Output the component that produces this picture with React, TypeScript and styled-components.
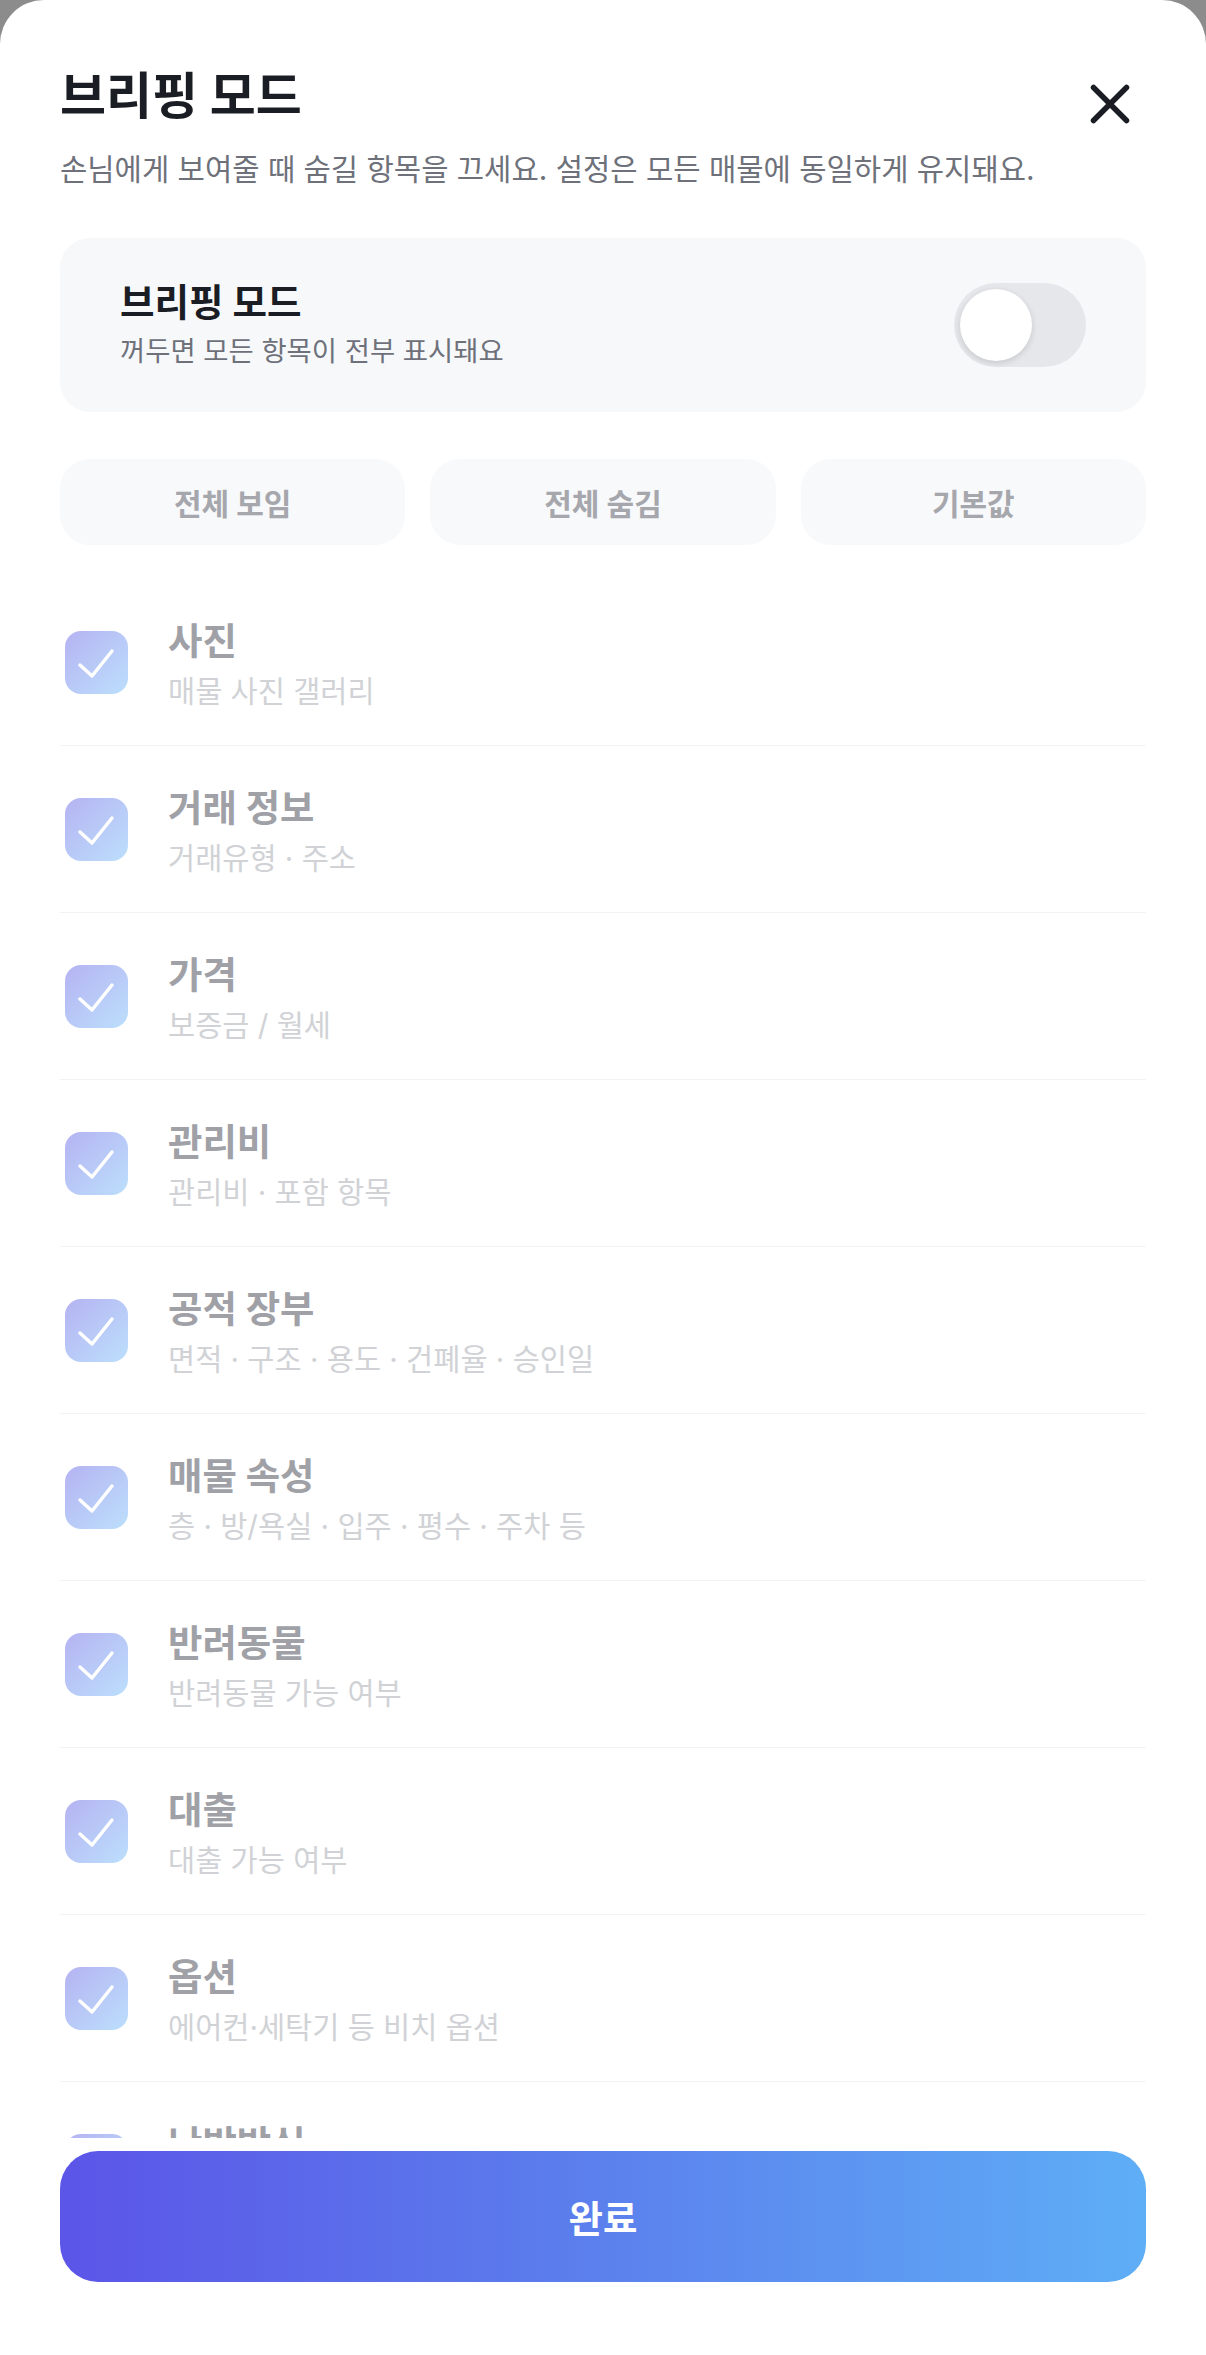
import React, { useState } from 'react';
import styled, { createGlobalStyle } from 'styled-components';

const GlobalStyle = createGlobalStyle`
  html, body {
    margin: 0;
    padding: 0;
    background: #8c8c8c;
  }
  body {
    font-family: "Inter", "Noto Sans CJK KR", "Noto Sans", sans-serif;
    -webkit-font-smoothing: antialiased;
  }
  * { box-sizing: border-box; }
`;

const Sheet = styled.div`
  width: 1206px;
  height: 2355px;
  background: #ffffff;
  border-radius: 44px 44px 0 0;
  display: flex;
  flex-direction: column;
  overflow: hidden;
`;

const Top = styled.div`
  flex-shrink: 0;
  padding: 66px 60px 0;
`;

const Header = styled.div`
  display: flex;
  justify-content: space-between;
  align-items: flex-start;
`;

const Title = styled.h1`
  margin: 0;
  font-size: 50px;
  line-height: 60px;
  font-weight: 700;
  color: #1b1d24;
`;

const CloseButton = styled.button`
  width: 44px;
  height: 44px;
  margin: 16px 14px 0 0;
  padding: 0;
  border: 0;
  background: none;
  display: flex;
  align-items: center;
  justify-content: center;
  cursor: pointer;
`;

const Description = styled.p`
  margin: 23px 0 0;
  font-size: 29.7px;
  line-height: 40px;
  color: #6e717a;
`;

const ModeCard = styled.div`
  margin-top: 49px;
  background: #f7f8fa;
  border-radius: 30px;
  padding: 43px 60px;
  display: flex;
  align-items: center;
  justify-content: space-between;
`;

const CardTitle = styled.div`
  font-size: 37.5px;
  line-height: 44px;
  font-weight: 700;
  color: #1b1d24;
`;

const CardSub = styled.div`
  margin-top: 8px;
  font-size: 27.4px;
  line-height: 36px;
  color: #6e717a;
`;

const SwitchTrack = styled.button<{ $on: boolean }>`
  width: 132px;
  height: 84px;
  border-radius: 42px;
  border: 0;
  padding: 6px;
  background: ${(p) => (p.$on ? '#5b6af0' : '#e5e7eb')};
  display: flex;
  justify-content: ${(p) => (p.$on ? 'flex-end' : 'flex-start')};
  cursor: pointer;
`;

const SwitchKnob = styled.span`
  width: 72px;
  height: 72px;
  border-radius: 50%;
  background: #ffffff;
  box-shadow: 0 2px 6px rgba(0, 0, 0, 0.14);
`;

const Actions = styled.div`
  margin-top: 47px;
  display: grid;
  grid-template-columns: repeat(3, 1fr);
  gap: 25px;
`;

const ActionButton = styled.button`
  height: 86px;
  border: 0;
  border-radius: 30px;
  background: #f8f9fb;
  font-family: inherit;
  font-size: 30px;
  font-weight: 700;
  color: #a6a7ad;
  cursor: pointer;
`;

const List = styled.div`
  flex: 1;
  min-height: 0;
  overflow: hidden;
  margin-top: 34px;
  padding: 0 60px;
`;

const Row = styled.div`
  height: 167px;
  border-bottom: 1px solid #f2f3f5;
  display: flex;
  align-items: center;
  gap: 40px;
  padding-left: 5px;
`;

const CheckBox = styled.span`
  width: 63px;
  height: 63px;
  flex-shrink: 0;
  border-radius: 16px;
  background: linear-gradient(135deg, #b5b3f2 0%, #bcdffc 100%);
  display: flex;
  align-items: center;
  justify-content: center;
`;

const RowText = styled.div`
  display: flex;
  flex-direction: column;
  margin-top: 5px;
`;

const RowTitle = styled.div`
  font-size: 37.4px;
  line-height: 44px;
  font-weight: 700;
  color: #a0a1a7;
`;

const RowSub = styled.div`
  margin-top: 8px;
  font-size: 29.5px;
  line-height: 38px;
  color: #d0d2d6;
`;

const Footer = styled.div`
  flex-shrink: 0;
  background: #ffffff;
  padding: 13px 60px 73px;
`;

const DoneButton = styled.button`
  width: 100%;
  height: 131px;
  border: 0;
  border-radius: 38px;
  background: linear-gradient(90deg, #5b55e8 0%, #5b7cec 45%, #5eaef6 100%);
  color: #ffffff;
  font-family: inherit;
  font-size: 37.4px;
  font-weight: 700;
  cursor: pointer;
`;

const items = [
  { title: '사진', sub: '매물 사진 갤러리' },
  { title: '거래 정보', sub: '거래유형 · 주소' },
  { title: '가격', sub: '보증금 / 월세' },
  { title: '관리비', sub: '관리비 · 포함 항목' },
  { title: '공적 장부', sub: '면적 · 구조 · 용도 · 건폐율 · 승인일' },
  { title: '매물 속성', sub: '층 · 방/욕실 · 입주 · 평수 · 주차 등' },
  { title: '반려동물', sub: '반려동물 가능 여부' },
  { title: '대출', sub: '대출 가능 여부' },
  { title: '옵션', sub: '에어컨·세탁기 등 비치 옵션' },
  { title: '난방방식', sub: '개별 · 중앙 · 지역 난방' },
];

const CloseIcon = () => (
  <svg width="44" height="44" viewBox="0 0 44 44" fill="none">
    <path d="M5.5 5.5 L38.5 38.5 M38.5 5.5 L5.5 38.5" stroke="#1b1d24" strokeWidth="5.5" strokeLinecap="round" />
  </svg>
);

const CheckIcon = () => (
  <svg width="63" height="63" viewBox="0 0 63 63" fill="none">
    <path d="M15 34 L27 45 L47 20" stroke="#ffffff" strokeWidth="3.5" strokeLinecap="round" strokeLinejoin="round" />
  </svg>
);

export default function App() {
  const [on, setOn] = useState(false);
  return (
    <>
      <GlobalStyle />
      <Sheet>
        <Top>
          <Header>
            <Title>브리핑 모드</Title>
            <CloseButton aria-label="닫기">
              <CloseIcon />
            </CloseButton>
          </Header>
          <Description>손님에게 보여줄 때 숨길 항목을 끄세요. 설정은 모든 매물에 동일하게 유지돼요.</Description>
          <ModeCard>
            <div>
              <CardTitle>브리핑 모드</CardTitle>
              <CardSub>꺼두면 모든 항목이 전부 표시돼요</CardSub>
            </div>
            <SwitchTrack $on={on} onClick={() => setOn(!on)} aria-label="브리핑 모드">
              <SwitchKnob />
            </SwitchTrack>
          </ModeCard>
          <Actions>
            <ActionButton>전체 보임</ActionButton>
            <ActionButton>전체 숨김</ActionButton>
            <ActionButton>기본값</ActionButton>
          </Actions>
        </Top>
        <List>
          {items.map((it) => (
            <Row key={it.title}>
              <CheckBox>
                <CheckIcon />
              </CheckBox>
              <RowText>
                <RowTitle>{it.title}</RowTitle>
                <RowSub>{it.sub}</RowSub>
              </RowText>
            </Row>
          ))}
        </List>
        <Footer>
          <DoneButton>완료</DoneButton>
        </Footer>
      </Sheet>
    </>
  );
}
